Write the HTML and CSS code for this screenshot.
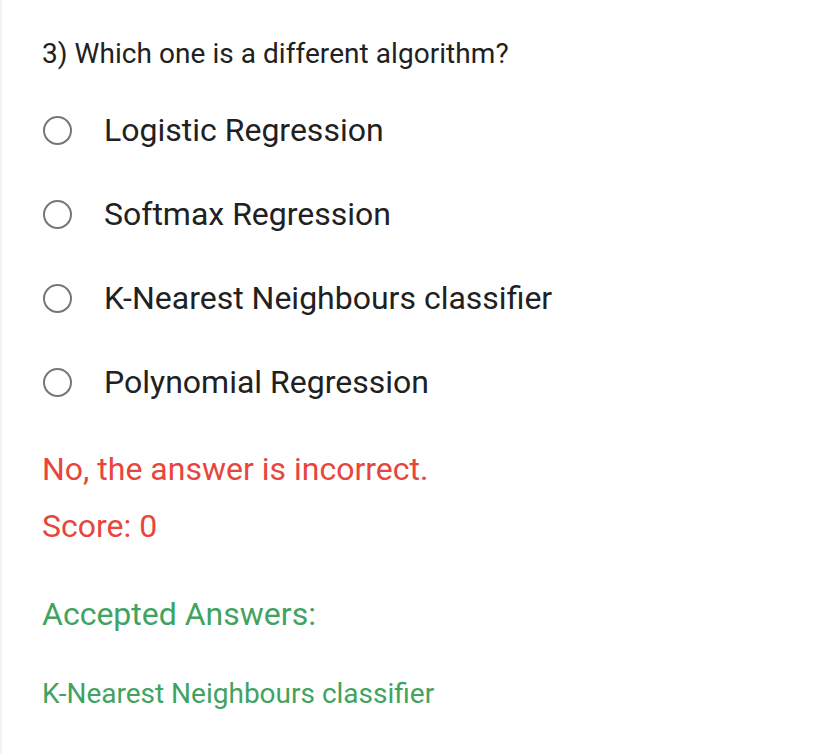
FILE: index.html
```html
<!DOCTYPE html>
<html lang="en">
<head>
<meta charset="utf-8">
<link rel="stylesheet" href="styles.css">
</head>
<body>
<div class="page">
  <div class="question">3) Which one is a different algorithm?</div>
  <ul class="options">
    <li class="option"><span class="radio"></span><span class="label">Logistic Regression</span></li>
    <li class="option"><span class="radio"></span><span class="label">Softmax Regression</span></li>
    <li class="option"><span class="radio"></span><span class="label">K-Nearest Neighbours classifier</span></li>
    <li class="option"><span class="radio"></span><span class="label">Polynomial Regression</span></li>
  </ul>
  <div class="feedback">
    <div class="wrong">No, the answer is incorrect.</div>
    <div class="score">Score: 0</div>
    <div class="accepted">Accepted Answers:</div>
    <div class="answer">K-Nearest Neighbours classifier</div>
  </div>
</div>
</body>
</html>
```
FILE: styles.css
```css
html, body {
  margin: 0;
  padding: 0;
  background: #ffffff;
}
body {
  font-family: Roboto, "Liberation Sans", sans-serif;
  color: #212121;
}
.page {
  min-height: 754px;
  box-sizing: border-box;
  border-left: 2px solid #f3f3f3;
  padding: 34px 0 0 40px;
}
.question {
  font-size: 28px;
  line-height: 40px;
  letter-spacing: 0.05px;
}
.options {
  list-style: none;
  margin: 36px 0 0 0;
  padding: 0;
  display: flex;
  flex-direction: column;
  gap: 44px;
}
.option {
  display: flex;
  align-items: center;
  height: 40px;
}
.radio {
  width: 25px;
  height: 25px;
  border: 2px solid #767676;
  border-radius: 50%;
  margin-left: 1px;
  flex: none;
}
.label {
  margin-left: 32px;
  font-size: 32px;
}
.feedback {
  margin-top: 49px;
}
.wrong, .score {
  color: #e8453c;
  font-size: 32px;
}
.wrong {
  line-height: 36px;
}
.score {
  margin-top: 21px;
  line-height: 36px;
}
.accepted {
  color: #41a35f;
  font-size: 32px;
  line-height: 36px;
  margin-top: 52px;
}
.answer {
  color: #41a35f;
  font-size: 28px;
  line-height: 32px;
  margin-top: 46px;
}
```
